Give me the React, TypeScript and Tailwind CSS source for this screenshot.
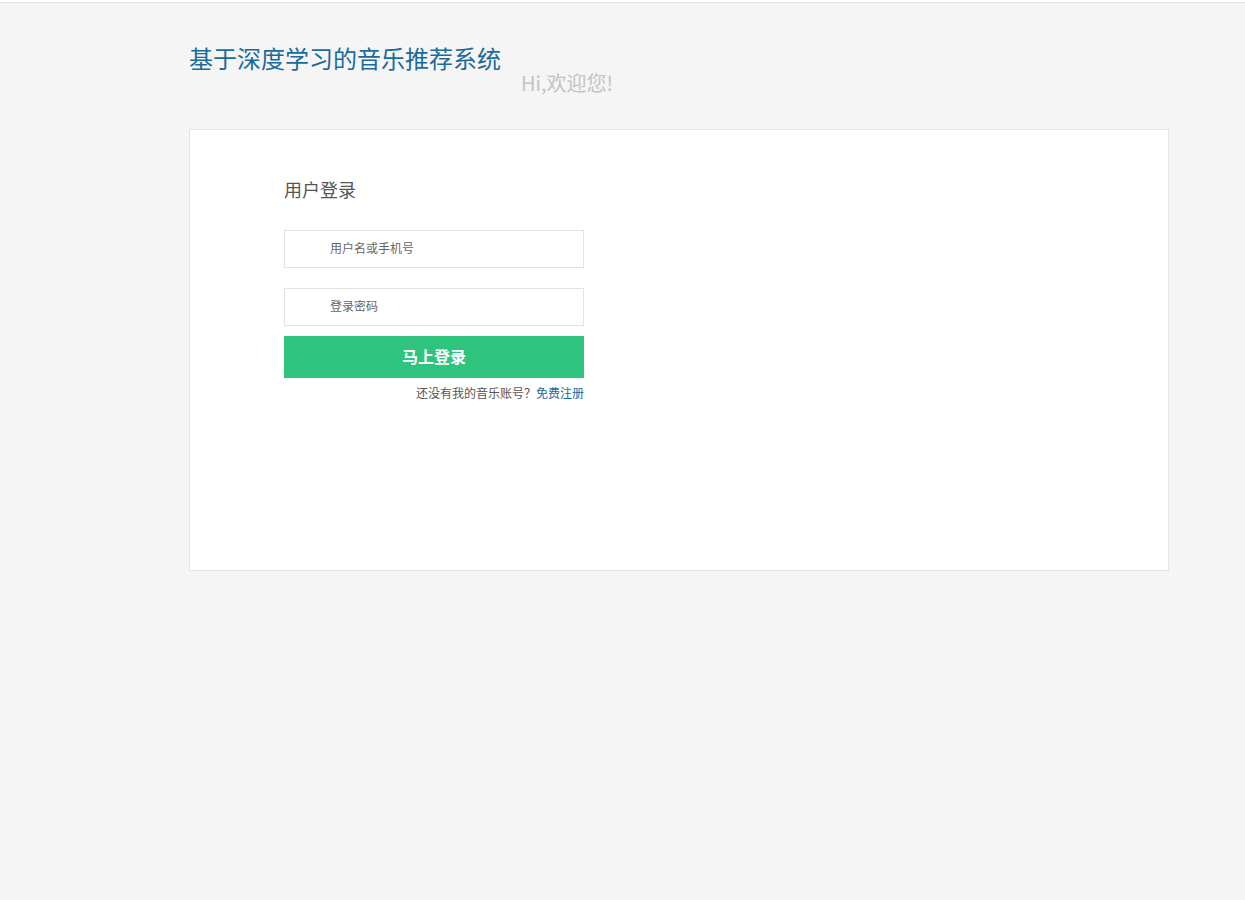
export default function App() {
  return (
    <div
      className="min-h-[900px] bg-[#f5f5f5] text-[#555]"
      style={{ fontFamily: '"Noto Sans CJK SC", "Noto Sans", sans-serif' }}
    >
      <div className="h-[3px] border-b border-[#e3e3e3] bg-white" />

      <div className="ml-[189px] w-[980px]">
        {/* 头部 */}
        <div className="flex h-[126px] items-start pt-[37px]">
          <h1 className="text-[24px] leading-[36px] text-[#1b6a9c]">基于深度学习的音乐推荐系统</h1>
          <span className="ml-[20px] mt-[28px] text-[20px] leading-[30px] text-[#c3c3c3]">Hi,欢迎您!</span>
        </div>

        {/* 登录卡片 */}
        <div className="h-[442px] border border-[#e5e5e5] bg-white pl-[94px] pt-[45px]">
          <div className="w-[300px]">
            <h2 className="text-[18px] leading-[28px] text-[#555]">用户登录</h2>

            <input
              type="text"
              placeholder="用户名或手机号"
              className="mt-[27px] block h-[38px] w-[300px] border border-[#e3e3e3] pb-[3px] pl-[45px] text-[12px] text-[#666] outline-none placeholder:text-[#666]"
            />
            <input
              type="password"
              placeholder="登录密码"
              className="mt-[20px] block h-[38px] w-[300px] border border-[#e3e3e3] pb-[3px] pl-[45px] text-[12px] text-[#666] outline-none placeholder:text-[#666]"
            />

            <button className="mt-[10px] block h-[42px] w-[300px] bg-[#2fc47e] pb-[3px] text-[16px] font-bold text-white">
              马上登录
            </button>

            <p className="mt-[6px] text-right text-[12px] leading-[18px] text-[#555]">
              还没有我的音乐账号？<a href="#" className="text-[#1b6a9c]">免费注册</a>
            </p>
          </div>
        </div>
      </div>
    </div>
  );
}
